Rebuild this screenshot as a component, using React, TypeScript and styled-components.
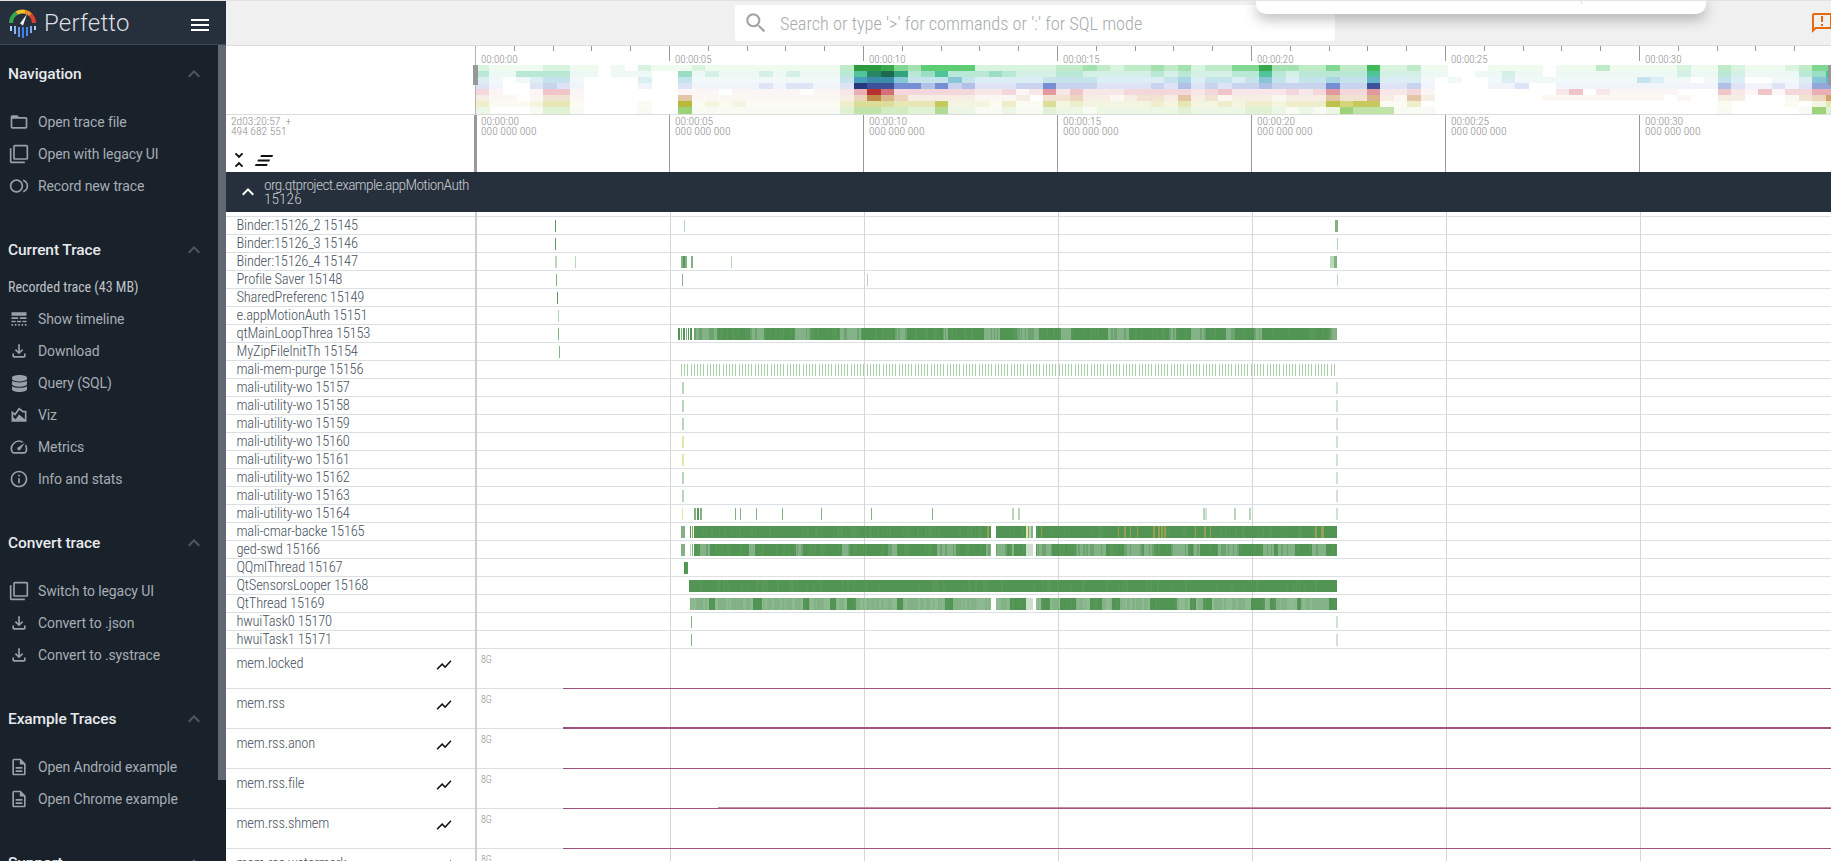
import React from 'react';
import styled, { createGlobalStyle } from 'styled-components';
import {
  MdExpandLess, MdOutlineFileDownload, MdFilterNone, MdFolderOpen, MdInfoOutline, MdLineStyle,
  MdOutlineAnnouncement, MdOutlineAreaChart, MdOutlineDescription, MdOutlineFiberSmartRecord,
  MdSearch, MdShowChart, MdOutlineSpeed, MdUnfoldLess,
} from 'react-icons/md';
import { FaDatabase } from 'react-icons/fa';

const GlobalStyle = createGlobalStyle`
  html, body { margin: 0; padding: 0; background: #fff; }
  body { font-family: Roboto, "Liberation Sans", sans-serif; }
`;

const Shell = styled.div`
  width: 1831px;
  height: 861px;
  box-sizing: border-box;
  padding-top: 1px;
  background: #e2e2e2;
  display: flex;
  overflow: hidden;
`;

const Sidebar = styled.nav`
  position: relative;
  flex: 0 0 226px;
  height: 860px;
  background: #19212b;
  overflow: hidden;
`;

const SideHeader = styled.header`
  height: 44px;
  box-sizing: border-box;
  background: #262f3c;
  border-bottom: 1px solid #3c4450;
  display: flex;
  align-items: center;
  padding-left: 9px;
`;

const BrandName = styled.span`
  margin-left: 8px;
  font-size: 24px;
  font-weight: 300;
  letter-spacing: 0.2px;
  color: #dcdfe3;
`;

const Hamburger = styled.span`
  margin-left: auto;
  margin-right: 17px;
  margin-top: 4px;
  width: 18px;
  height: 12px;
  border-top: 2px solid #fff;
  border-bottom: 2px solid #fff;
  box-sizing: border-box;
  display: flex;
  align-items: center;

  &::before {
    content: '';
    width: 100%;
    height: 2px;
    background: #fff;
  }
`;

const SideBody = styled.div`
  padding-top: 13px;
`;

const Section = styled.section`
  margin-bottom: 32px;
`;

const SectionHead = styled.div`
  height: 32px;
  margin-bottom: 16px;
  padding: 0 20px 0 8px;
  display: flex;
  align-items: center;
  justify-content: space-between;
  font-size: 15.5px;
  font-weight: 500;
  letter-spacing: -0.1px;
  color: #e8eaed;

  svg {
    width: 24px;
    height: 24px;
    color: #4e5864;
  }
`;

const TraceName = styled.div`
  margin: -3px 0 8px 8px;
  height: 16px;
  line-height: 16px;
  font-size: 14px;
  font-stretch: 75%;
  color: #bfc3c8;
`;

const SideItem = styled.div`
  height: 32px;
  padding-left: 9px;
  display: flex;
  align-items: center;
  font-size: 14px;
  letter-spacing: -0.1px;
  color: #a6adb5;

  svg {
    width: 20px;
    height: 20px;
    margin-right: 9px;
    color: #98a0a9;
  }
`;

const DbIconWrap = styled.span`
  width: 20px;
  margin-right: 9px;
  display: flex;
  justify-content: center;

  svg {
    width: 17px;
    height: 17px;
    margin: 0;
  }
`;

const SideThumb = styled.div`
  position: absolute;
  top: 44px;
  right: 0;
  width: 8px;
  height: 735px;
  background: #626873;
`;

const Main = styled.main`
  flex: 1;
  min-width: 0;
  display: flex;
  flex-direction: column;
  background: #fff;
`;

const Topbar = styled.div`
  position: relative;
  height: 45px;
  flex: none;
  box-sizing: border-box;
  background: #f0f0f0;
  border-bottom: 1px solid #dcdcdc;
  display: flex;
  align-items: center;
  overflow: hidden;
`;

const SearchBox = styled.div`
  margin-left: 509px;
  width: 600px;
  height: 36px;
  background: #fff;
  border-radius: 2px;
  display: flex;
  align-items: center;
  padding-left: 8px;
  box-sizing: border-box;
  font-size: 18.3px;
  font-weight: 300;
  font-stretch: 75%;
  color: #a8abae;

  svg {
    width: 26px;
    height: 26px;
    margin-right: 11px;
    color: #a5a5a5;
  }
`;

const FeedbackIcon = styled.span`
  margin-left: auto;
  margin-right: -3px;
  display: flex;
  color: #e8680c;

  svg {
    width: 24px;
    height: 24px;
  }
`;

const Popup = styled.div`
  position: absolute;
  top: -2px;
  left: 1030px;
  width: 450px;
  height: 15px;
  background: #fff;
  border-radius: 0 0 10px 10px;
  box-shadow: 0 5px 14px rgba(0, 0, 0, 0.28);

  &::after {
    content: '';
    position: absolute;
    top: 0;
    left: 325px;
    width: 1px;
    height: 5px;
    background: #d6e0f0;
  }
`;

const OverviewChart = styled.svg`
  display: block;
  flex: none;
  shape-rendering: crispEdges;

  text {
    font-size: 11px;
    font-weight: 300;
    font-stretch: 75%;
    fill: #8e8e8e;
  }
`;

const TimeHeader = styled.div`
  height: 57px;
  flex: none;
  display: flex;
`;

const HeaderLeft = styled.div`
  flex: 0 0 248px;
  box-sizing: border-box;
  padding: 1px 0 0 5px;
  font-size: 11.5px;
  line-height: 10px;
  font-weight: 300;
  font-stretch: 85%;
  color: #8e8e8e;
  white-space: pre;
`;

const HeaderTools = styled.div`
  margin: 13px 0 0 -3px;
  display: flex;
  align-items: center;
  gap: 5px;
  color: #111;

  svg {
    display: block;
  }
`;

const TickCell = styled.div<{ $first?: boolean }>`
  flex: 0 0 ${p => (p.$first ? 195 : 194)}px;
  box-sizing: border-box;
  border-left: ${p => (p.$first ? '3px' : '1px')} solid #9a9a9a;
  padding: 1px 0 0 ${p => (p.$first ? 4 : 5)}px;
  font-size: 11.5px;
  line-height: 10px;
  font-weight: 300;
  font-stretch: 85%;
  color: #8e8e8e;
`;

const ProcessHeader = styled.div`
  height: 40px;
  flex: none;
  background: #262f3c;
  display: flex;
  align-items: center;
  padding-left: 10px;
  font-size: 15.5px;
  line-height: 14px;
  font-weight: 300;
  font-stretch: 75%;
  color: #c6cace;

  svg {
    width: 24px;
    height: 24px;
    margin-right: 4px;
    color: #fff;
  }
`;

const ProcessName = styled.span`
  display: block;
  letter-spacing: -0.65px;
`;

const TrackRow = styled.div<{ $h: number }>`
  height: ${p => p.$h}px;
  flex: none;
  display: flex;
  box-shadow: inset 0 -1px 0 #dcdfe3;
`;

const TrackLabel = styled.div<{ $tall?: boolean }>`
  flex: 0 0 251px;
  box-sizing: border-box;
  border-right: 2px solid #c9cdd4;
  padding-left: 10.5px;
  display: flex;
  align-items: ${p => (p.$tall ? 'flex-start' : 'center')};
  padding-top: ${p => (p.$tall ? 6 : 0)}px;
  padding-bottom: ${p => (p.$tall ? 0 : 1)}px;
  line-height: 17px;
  font-size: 14.5px;
  letter-spacing: -0.2px;
  font-weight: 300;
  font-stretch: 75%;
  color: #47525e;
  box-shadow: inset 0 -1px 0 #dcdfe3;
  white-space: nowrap;
`;

const ChartToggle = styled.span`
  margin-left: auto;
  margin-right: 22px;
  margin-top: 1px;
  display: flex;
  color: #111;

  svg {
    width: 18px;
    height: 18px;
  }
`;

const TrackChart = styled.svg`
  display: block;
  flex: none;
  shape-rendering: crispEdges;

  text {
    font-size: 10px;
    font-weight: 300;
    font-stretch: 75%;
    fill: #8e8e8e;
  }
`;

const DARK = '#529453';
const DARK2 = '#589858';
const MID = '#82b285';
const LIGHT = '#b9d7bb';
const PALE = '#dfe9ab';
const OCHRE = '#95a050';

type Mark = [number, number, string];

// little deterministic generator so the stripes stay put between renders
const makeRandom = (seed: number) => {
  let s = seed;
  return () => {
    s = (s * 1664525 + 1013904223) % 4294967296;
    return s / 4294967296;
  };
};

type Range = [number, number];

const stripes = (
  from: number,
  to: number,
  seed: number,
  patches: Range[],
  normal: [string, string, number],
  patch: [string, string, number],
): Mark[] => {
  const rnd = makeRandom(seed);
  const out: Mark[] = [];
  let x = from;
  while (x < to) {
    const w = Math.min(1 + Math.floor(rnd() * 2), to - x);
    const inPatch = patches.some(([a, b]) => x >= a && x < b);
    const [a, b, mix] = inPatch ? patch : normal;
    out.push([x, w, rnd() < mix ? b : a]);
    x += w;
  }
  return out;
};

const DARK_BASE: [string, string, number] = [DARK, DARK2, 0.3];
const LIGHT_PATCH: [string, string, number] = [MID, '#6da371', 0.35];

const mainLoop: Mark[] = [
  [678, 2, DARK], [681, 1, MID], [683, 2, DARK], [686, 1, MID], [688, 1, DARK], [690, 2, DARK],
  ...stripes(694, 1337, 11, [
    [694, 716], [750, 763], [795, 810], [840, 861], [895, 906], [942, 948], [983, 1000], [1017, 1038],
    [1060, 1070], [1107, 1128], [1168, 1176], [1190, 1205], [1226, 1235], [1254, 1262], [1329, 1337],
  ], DARK_BASE, LIGHT_PATCH),
];

const purge: Mark[] = [];
for (let x = 681; x < 1337; x += 3.2) purge.push([Math.round(x), 1, '#a9cfab']);

const OCHRE_PATCH: [string, string, number] = [DARK, OCHRE, 0.14];

const cmar: Mark[] = [
  [681, 4, MID], [690, 1, DARK], [692, 1, OCHRE],
  ...stripes(694, 991, 23, [[983, 991]], DARK_BASE, OCHRE_PATCH),
  ...stripes(996, 1026, 24, [[996, 998], [1000, 1010]], DARK_BASE, OCHRE_PATCH),
  [1026, 2, PALE], [1028, 1, OCHRE], [1029, 2, LIGHT], [1031, 2, MID],
  ...stripes(1036, 1337, 25, [[1036, 1048], [1112, 1165], [1195, 1215], [1315, 1325]], DARK_BASE, OCHRE_PATCH),
];

const gedSwd: Mark[] = [
  [681, 4, MID], [690, 1, LIGHT], [692, 1, MID],
  ...stripes(694, 991, 31, [
    [700, 709], [748, 755], [796, 802], [842, 850], [888, 897], [937, 956], [985, 991],
  ], DARK_BASE, LIGHT_PATCH),
  ...stripes(996, 1026, 32, [[996, 1007], [1011, 1014]], DARK_BASE, LIGHT_PATCH),
  [1026, 7, '#cbdfcc'],
  ...stripes(1036, 1337, 33, [
    [1037, 1052], [1076, 1105], [1124, 1141], [1143, 1154], [1171, 1187], [1193, 1200], [1218, 1239],
    [1263, 1274], [1278, 1294], [1312, 1326],
  ], DARK_BASE, LIGHT_PATCH),
];

const MID_BASE: [string, string, number] = [MID, '#8fb991', 0.4];
const DARK_PATCH: [string, string, number] = [DARK, DARK2, 0.2];

const qtThread: Mark[] = [
  ...stripes(690, 991, 41, [
    [708, 714], [753, 761], [802, 809], [830, 835], [847, 855], [896, 903], [945, 953],
  ], MID_BASE, DARK_PATCH),
  ...stripes(996, 1026, 42, [[1010, 1026]], MID_BASE, DARK_PATCH),
  [1026, 7, '#cbdfcc'],
  ...stripes(1036, 1337, 43, [
    [1040, 1050], [1060, 1076], [1089, 1102], [1112, 1120], [1150, 1177], [1190, 1196], [1202, 1212],
    [1250, 1264], [1270, 1275], [1296, 1301], [1328, 1337],
  ], MID_BASE, DARK_PATCH),
];

interface Thread {
  name: string;
  marks: Mark[];
}

const threads: Thread[] = [
  { name: 'Binder:15126_2 15145', marks: [[555, 1, DARK2], [684, 1, LIGHT], [1335, 3, MID]] },
  { name: 'Binder:15126_3 15146', marks: [[555, 1, DARK2], [1337, 1, LIGHT]] },
  { name: 'Binder:15126_4 15147', marks: [[555, 2, LIGHT], [575, 1, LIGHT], [681, 2, MID], [683, 2, DARK2], [685, 2, MID], [691, 2, MID], [731, 1, LIGHT], [1330, 7, LIGHT], [1334, 3, MID]] },
  { name: 'Profile Saver 15148', marks: [[556, 1, MID], [682, 1, MID], [867, 1, LIGHT], [1337, 1, LIGHT]] },
  { name: 'SharedPreferenc 15149', marks: [[557, 1, DARK2]] },
  { name: 'e.appMotionAuth 15151', marks: [[558, 1, LIGHT]] },
  { name: 'qtMainLoopThrea 15153', marks: [[558, 1, MID], ...mainLoop] },
  { name: 'MyZipFileInitTh 15154', marks: [[559, 1, MID]] },
  { name: 'mali-mem-purge 15156', marks: purge },
  { name: 'mali-utility-wo 15157', marks: [[682, 2, LIGHT], [1336, 2, '#cfe3d0']] },
  { name: 'mali-utility-wo 15158', marks: [[682, 2, LIGHT], [1336, 2, '#cfe3d0']] },
  { name: 'mali-utility-wo 15159', marks: [[682, 2, LIGHT], [1336, 2, '#cfe3d0']] },
  { name: 'mali-utility-wo 15160', marks: [[682, 2, PALE], [1336, 2, '#cfe3d0']] },
  { name: 'mali-utility-wo 15161', marks: [[682, 2, PALE], [1336, 2, '#cfe3d0']] },
  { name: 'mali-utility-wo 15162', marks: [[682, 2, LIGHT], [1336, 2, '#cfe3d0']] },
  { name: 'mali-utility-wo 15163', marks: [[682, 2, LIGHT], [1336, 2, '#cfe3d0']] },
  {
    name: 'mali-utility-wo 15164',
    marks: [
      [682, 1, PALE], [694, 2, MID], [697, 2, DARK2], [700, 2, MID], [735, 1, MID], [740, 1, MID], [756, 1, MID],
      [782, 1, MID], [821, 1, MID], [871, 1, MID], [932, 1, MID], [1012, 2, LIGHT], [1018, 2, LIGHT],
      [1203, 2, LIGHT], [1205, 2, '#cfe3d0'], [1234, 2, LIGHT], [1249, 2, LIGHT], [1336, 2, '#cfe3d0'],
    ],
  },
  { name: 'mali-cmar-backe 15165', marks: cmar },
  { name: 'ged-swd 15166', marks: gedSwd },
  { name: 'QQmlThread 15167', marks: [[684, 3, DARK], [687, 1, DARK2]] },
  { name: 'QtSensorsLooper 15168', marks: stripes(689, 1337, 51, [], [DARK, DARK2, 0.15], DARK_BASE) },
  { name: 'QtThread 15169', marks: qtThread },
  { name: 'hwuiTask0 15170', marks: [[691, 1, MID], [1336, 2, '#cfe3d0']] },
  { name: 'hwuiTask1 15171', marks: [[691, 1, MID], [1336, 2, '#cfe3d0']] },
];

const GRID = [670, 864, 1058, 1252, 1446, 1640];
const CHART_X = 477;
const CHART_W = 1354;

const ThreadChart = ({ marks }: { marks: Mark[] }) => (
  <TrackChart width={CHART_W} height={18} viewBox={`${CHART_X} 0 ${CHART_W} 18`}>
    {GRID.map(x => <rect key={x} x={x} y={0} width={1} height={18} fill="#d6d6d6" />)}
    {marks.map(([x, w, c], i) => <rect key={i} x={x} y={3} width={w} height={12} fill={c} />)}
  </TrackChart>
);

const memTracks: { name: string; thick?: boolean; step?: boolean }[] = [
  { name: 'mem.locked' },
  { name: 'mem.rss', thick: true },
  { name: 'mem.rss.anon' },
  { name: 'mem.rss.file', step: true },
  { name: 'mem.rss.shmem' },
  { name: 'mem.rss.watermark' },
];

const MemChart = ({ thick, step }: { thick?: boolean; step?: boolean }) => (
  <TrackChart width={CHART_W} height={40} viewBox={`${CHART_X} 0 ${CHART_W} 40`}>
    {GRID.map(x => <rect key={x} x={x} y={0} width={1} height={40} fill="#d6d6d6" />)}
    <text x={481} y={14}>8G</text>
    <rect x={563} y={thick ? 38 : 39} width={1268} height={thick ? 2 : 1} fill="#a4507c" />
    {step && <rect x={718} y={38} width={1113} height={1} fill="#c88aa8" />}
  </TrackChart>
);

// heatmap: one string per cpu band, one digit per 13.5px bucket
const HEAT: string[] = [
  '2111122110' + '1021112111' + '1111111399' + '8546666222' + '2223343233' + '4342335584' + '4335337223' + '1100011110' + '1113111112' + '11321112355',
  '3113333110' + '1110041211' + '1212111368' + '9734633343' + '2223322222' + '3232223363' + '2333336222' + '1100112110' + '1111111112' + '11321111346',
  '2101233100' + '0020031111' + '1111111378' + '8533353222' + '2233332222' + '2342332353' + '2334336222' + '1010012111' + '1111113211' + '01320011256',
  '2100232100' + '0010021111' + '1212211298' + '8664634222' + '3363332222' + '3242323343' + '3336338223' + '1000011200' + '1111111111' + '11421121255',
  '3100144100' + '0000011101' + '1111011259' + '7333333223' + '1262422233' + '3332342222' + '3236336223' + '1000000000' + '2402111110' + '00421413355',
  '2110133100' + '0000051111' + '1111111249' + '6422222111' + '2033422123' + '3252312221' + '2225336215' + '2000000001' + '1111111101' + '00220001347',
  '3111244100' + '0010091212' + '1111111355' + '5444722213' + '1152322222' + '3242232332' + '3338677113' + '0000000000' + '0000000000' + '00100001024',
  '2000133100' + '0010071111' + '1111111355' + '4433622112' + '1132212222' + '2232222332' + '1212755511' + '1000000000' + '0000000000' + '00100000173',
];

const BANDS: [number[], number[]][] = [
  [[79, 200, 104], [46, 154, 64]],
  [[64, 191, 144], [28, 106, 80]],
  [[90, 176, 200], [42, 122, 154]],
  [[106, 133, 208], [38, 57, 127]],
  [[224, 144, 152], [184, 48, 48]],
  [[216, 176, 128], [192, 138, 72]],
  [[207, 208, 112], [184, 184, 58]],
  [[168, 216, 136], [132, 200, 88]],
];

const LEVEL_ALPHA = [0, 0.09, 0.22, 0.36, 0.52, 0.72, 0.92];

const heatColor = (band: number, level: number) => {
  const [mid, dark] = BANDS[band];
  const mix = (a: number[], b: number[], t: number) =>
    `rgb(${a.map((v, i) => Math.round(v + (b[i] - v) * t)).join(',')})`;
  if (level <= 6) return mix([255, 255, 255], mid, LEVEL_ALPHA[level]);
  return mix(mid, dark, (level - 6) / 3);
};

const OVERVIEW_TICKS = [0, 5, 10, 15, 20, 25, 30];

const Overview = () => {
  const minor: number[] = [];
  for (let k = 0; k < 35; k++) if (k % 5) minor.push(475 + k * 38.8);
  return (
    <OverviewChart width={1605} height={69} viewBox="226 46 1605 69">
      {minor.map(x => <rect key={x} x={Math.round(x)} y={46} width={1} height={5} fill="#9a9a9a" />)}
      {OVERVIEW_TICKS.map((t, i) => (
        <g key={t}>
          <rect x={475 + i * 194} y={46} width={1} height={15} fill="#9a9a9a" />
          <text x={481 + i * 194} y={63}>{`00:00:${String(t).padStart(2, '0')}`}</text>
        </g>
      ))}
      {HEAT.map((row, band) =>
        row.split('').map((d, i) =>
          d === '0' ? null : (
            <rect
              key={`${band}-${i}`}
              x={Math.round(475.5 + i * 13.5)}
              y={65 + band * 6}
              width={14}
              height={band === 7 ? 7 : 6}
              fill={heatColor(band, Number(d))}
            />
          ),
        ),
      )}
      <rect x={475} y={46} width={1} height={68} fill="#b4b4b4" />
      <rect x={473} y={65} width={5} height={20} fill="#989898" />
      <rect x={1828} y={65} width={3} height={20} fill="#989898" />
      <rect x={226} y={114} width={1605} height={1} fill="#dcdcdc" />
    </OverviewChart>
  );
};

const LinesIcon = () => (
  <svg width="18" height="11" viewBox="0 0 18 11">
    <path d="M6 0h12l-.6 2H5.4zM3 4.500h12l-.6 2H2.400zM.6 9h12l-.6 2H0z" fill="#111" />
  </svg>
);

const Logo = () => (
  <svg width="27" height="30" viewBox="0 0 27 30">
    <path d="M2 15 A11.500 11.500 0 0 1 7.750 5.040" fill="none" stroke="#35a84a" strokeWidth="4" />
    <path d="M7.750 5.040 A11.500 11.500 0 0 1 16.480 3.900" fill="none" stroke="#f4c22f" strokeWidth="4" />
    <path d="M16.480 3.900 A11.500 11.500 0 0 1 21.630 6.870" fill="none" stroke="#f08a24" strokeWidth="4" />
    <path d="M21.630 6.870 A11.500 11.500 0 0 1 25 15" fill="none" stroke="#dc3f2e" strokeWidth="4" />
    <path d="M11 15.500 L18 6 L14 17.500z" fill="#f4f4f4" />
    <rect x="1" y="18" width="2" height="5" fill="#b5d0f7" />
    <rect x="5" y="18" width="2" height="8" fill="#8db5f2" />
    <rect x="9" y="19" width="2" height="10" fill="#5f97ee" />
    <rect x="13" y="19" width="2" height="11" fill="#3f80e6" />
    <rect x="17" y="19" width="2" height="9" fill="#4a88e8" />
    <rect x="21" y="18" width="2" height="7" fill="#7fabf0" />
    <rect x="25" y="18" width="2" height="4" fill="#a9c8f5" />
  </svg>
);

const DB = () => <DbIconWrap><FaDatabase /></DbIconWrap>;

const navItems = [
  { icon: <MdFolderOpen />, text: 'Open trace file' },
  { icon: <MdFilterNone />, text: 'Open with legacy UI' },
  { icon: <MdOutlineFiberSmartRecord />, text: 'Record new trace' },
];
const traceItems = [
  { icon: <MdLineStyle />, text: 'Show timeline' },
  { icon: <MdOutlineFileDownload />, text: 'Download' },
  { icon: <DB />, text: 'Query (SQL)' },
  { icon: <MdOutlineAreaChart />, text: 'Viz' },
  { icon: <MdOutlineSpeed />, text: 'Metrics' },
  { icon: <MdInfoOutline />, text: 'Info and stats' },
];
const convertItems = [
  { icon: <MdFilterNone />, text: 'Switch to legacy UI' },
  { icon: <MdOutlineFileDownload />, text: 'Convert to .json' },
  { icon: <MdOutlineFileDownload />, text: 'Convert to .systrace' },
];
const exampleItems = [
  { icon: <MdOutlineDescription />, text: 'Open Android example' },
  { icon: <MdOutlineDescription />, text: 'Open Chrome example' },
];

const SideSection = ({ title, items, note }: { title: string; items: { icon: React.ReactNode; text: string }[]; note?: string }) => (
  <Section>
    <SectionHead>{title}<MdExpandLess /></SectionHead>
    {note && <TraceName>{note}</TraceName>}
    {items.map(it => <SideItem key={it.text}>{it.icon}{it.text}</SideItem>)}
  </Section>
);

const App = () => (
  <Shell>
    <GlobalStyle />
    <Sidebar>
      <SideHeader>
        <Logo />
        <BrandName>Perfetto</BrandName>
        <Hamburger />
      </SideHeader>
      <SideBody>
        <SideSection title="Navigation" items={navItems} />
        <SideSection title="Current Trace" note="Recorded trace (43 MB)" items={traceItems} />
        <SideSection title="Convert trace" items={convertItems} />
        <SideSection title="Example Traces" items={exampleItems} />
        <SideSection title="Support" items={[]} />
      </SideBody>
      <SideThumb />
    </Sidebar>
    <Main>
      <Topbar>
        <SearchBox><MdSearch />Search or type &apos;&gt;&apos; for commands or &apos;:&apos; for SQL mode</SearchBox>
        <Popup />
        <FeedbackIcon><MdOutlineAnnouncement /></FeedbackIcon>
      </Topbar>
      <Overview />
      <TimeHeader>
        <HeaderLeft>
          {'2d03:20:57  +\n494 682 551'}
          <HeaderTools>
            <MdUnfoldLess size={22} />
            <LinesIcon />
          </HeaderTools>
        </HeaderLeft>
        {OVERVIEW_TICKS.map((t, i) => (
          <TickCell key={t} $first={i === 0}>
            {`00:00:${String(t).padStart(2, '0')}`}<br />000 000 000
          </TickCell>
        ))}
      </TimeHeader>
      <ProcessHeader>
        <MdExpandLess />
        <span>
          <ProcessName>org.qtproject.example.appMotionAuth</ProcessName>
          15126
        </span>
      </ProcessHeader>
      <TrackRow $h={5}>
        <TrackLabel />
        <TrackChart width={CHART_W} height={5} viewBox={`${CHART_X} 0 ${CHART_W} 5`}>
          {GRID.map(x => <rect key={x} x={x} y={0} width={1} height={5} fill="#d6d6d6" />)}
        </TrackChart>
      </TrackRow>
      {threads.map(t => (
        <TrackRow key={t.name} $h={18}>
          <TrackLabel>{t.name}</TrackLabel>
          <ThreadChart marks={t.marks} />
        </TrackRow>
      ))}
      {memTracks.map(m => (
        <TrackRow key={m.name} $h={40}>
          <TrackLabel $tall>
            {m.name}
            <ChartToggle><MdShowChart /></ChartToggle>
          </TrackLabel>
          <MemChart thick={m.thick} step={m.step} />
        </TrackRow>
      ))}
    </Main>
  </Shell>
);

export default App;
